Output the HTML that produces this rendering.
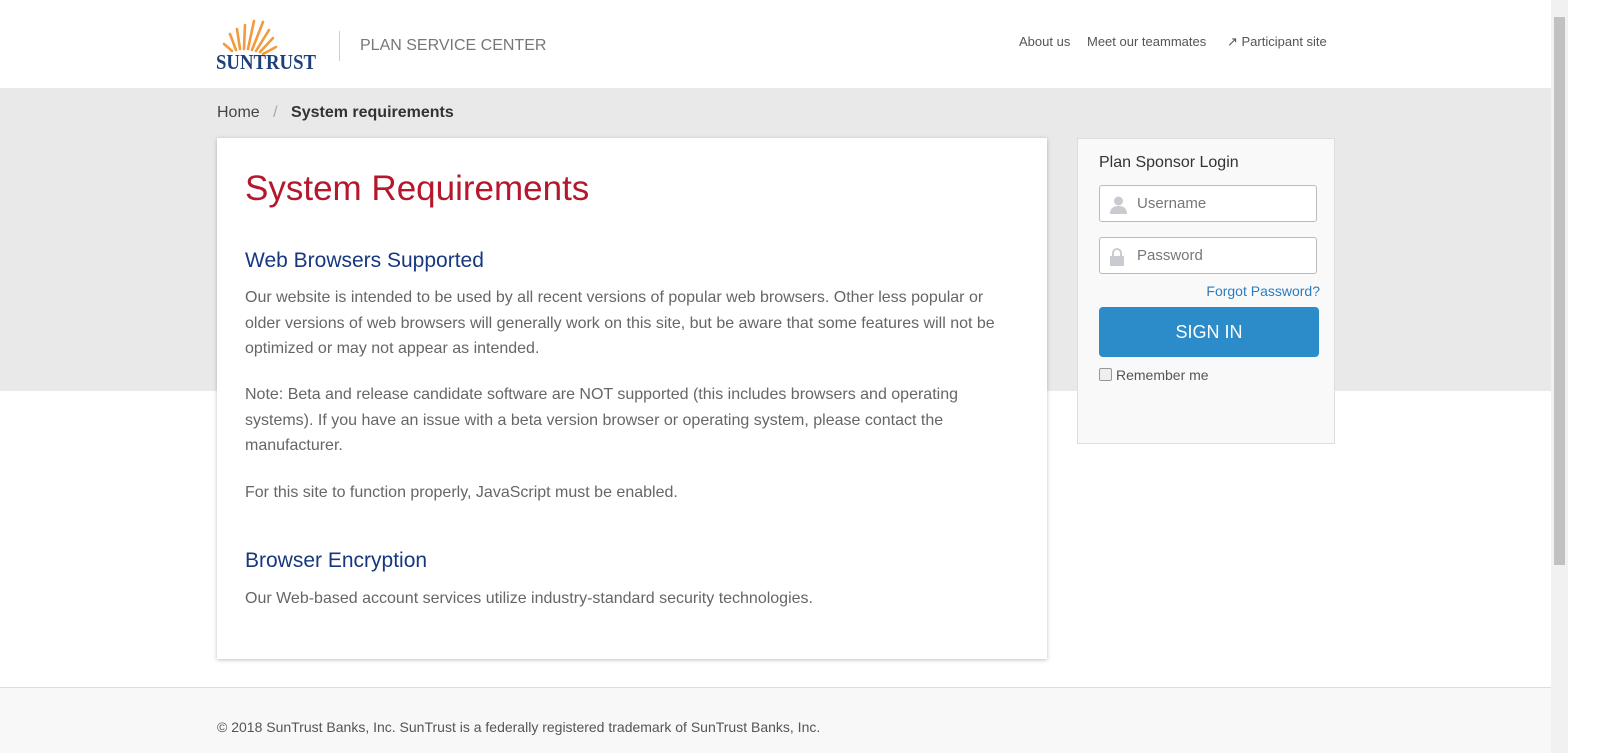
<!DOCTYPE html>
<html><head><meta charset="utf-8"><style>
*{box-sizing:border-box;margin:0;padding:0}
body{width:1600px;height:753px;overflow:hidden;background:#fff;font-family:"Liberation Sans",Arial,sans-serif;position:relative}
.abs{position:absolute}
.band{left:0;top:88px;width:1551px;height:303px;background:#e9e9e9}
.foot{left:0;top:687px;width:1551px;height:66px;background:#f8f8f8;border-top:1px solid #ddd}
.sb{left:1551px;top:0;width:17px;height:753px;background:#f1f1f1}
.sb div{position:absolute;left:3px;top:17px;width:11px;height:548px;background:#c1c1c1}
.card{left:217px;top:138px;width:830px;height:521px;background:#fff;box-shadow:0 1px 4px rgba(0,0,0,.25)}
p.t{color:#666;font-size:16px;line-height:25.5px}
h2{color:#17387f;font-weight:normal;font-size:21px}
.login{left:1077px;top:138px;width:258px;height:306px;background:#f9f9f9;border:1px solid #ddd}
.inp{position:absolute;left:21px;width:218px;height:37px;border:1px solid #bbb;border-radius:3px;background:#fff;color:#777;font-size:15px;padding:9px 0 0 37px}
</style></head><body>
<div class="abs band"></div>
<div class="abs foot"></div>
<div class="abs sb"><div></div></div>
<svg class="abs" style="left:216px;top:16px" width="102" height="56">
<g stroke="#f39a3c" stroke-width="2.6" stroke-linecap="round">
<line x1="20" y1="34" x2="14" y2="18"/><line x1="24" y1="33" x2="21" y2="13"/><line x1="28" y1="33" x2="29" y2="9"/><line x1="32" y1="33" x2="38" y2="5"/><line x1="36" y1="34" x2="47" y2="6"/><line x1="40" y1="35" x2="53" y2="14"/><line x1="44" y1="36" x2="57" y2="22"/><line x1="47" y1="38" x2="60" y2="31"/><line x1="16" y1="35" x2="8" y2="28"/>
</g>
<text x="0" y="53" font-family="Liberation Serif,serif" font-weight="bold" font-size="21" fill="#1d3f7a" textLength="100" lengthAdjust="spacingAndGlyphs">SUNTRUST</text>
</svg>
<div class="abs" style="left:339px;top:31px;width:1px;height:30px;background:#ccc"></div>
<div class="abs" style="left:360px;top:37px;font-size:16px;color:#777">PLAN SERVICE CENTER</div>
<div class="abs" style="left:1019px;top:34px;font-size:13px;color:#555">About us</div>
<div class="abs" style="left:1087px;top:34px;font-size:13px;color:#555">Meet our teammates</div>
<div class="abs" style="left:1227px;top:34px;font-size:13px;color:#555">&#x2197;&#xFE0E; Participant site</div>
<div class="abs" style="left:217px;top:104px;font-size:16px;color:#444">Home <span style="color:#aaa;margin:0 9px">/</span> <b style="color:#333">System requirements</b></div>
<div class="abs card">
<div style="position:absolute;left:28px;top:31px;font-size:35px;color:#b5172d">System Requirements</div>
<h2 class="abs" style="left:28px;top:111px">Web Browsers Supported</h2>
<p class="t abs" style="left:28px;top:147px;width:770px">Our website is intended to be used by all recent versions of popular web browsers. Other less popular or older versions of web browsers will generally work on this site, but be aware that some features will not be optimized or may not appear as intended.</p>
<p class="t abs" style="left:28px;top:244px;width:770px">Note: Beta and release candidate software are NOT supported (this includes browsers and operating systems). If you have an issue with a beta version browser or operating system, please contact the manufacturer.</p>
<p class="t abs" style="left:28px;top:342px">For this site to function properly, JavaScript must be enabled.</p>
<h2 class="abs" style="left:28px;top:411px">Browser Encryption</h2>
<p class="t abs" style="left:28px;top:448px">Our Web-based account services utilize industry-standard security technologies.</p>
</div>
<div class="abs login">
<div style="position:absolute;left:21px;top:15px;font-size:16px;color:#333">Plan Sponsor Login</div>
<div class="inp" style="top:46px">Username
<svg style="position:absolute;left:9px;top:10px" width="19" height="18"><circle cx="9.5" cy="5" r="4.5" fill="#c8cbd0"/><path d="M1 18 Q1 10 9.5 10 Q18 10 18 18Z" fill="#c8cbd0"/></svg></div>
<div class="inp" style="top:98px">Password
<svg style="position:absolute;left:9px;top:10px" width="16" height="18"><path d="M4 8V5a4 4 0 0 1 8 0v3" stroke="#c8cbd0" stroke-width="2" fill="none"/><rect x="1" y="8" width="14" height="10" fill="#c8cbd0"/></svg></div>
<div style="position:absolute;right:14px;top:144px;font-size:14px;color:#2a7dc0">Forgot Password?</div>
<div style="position:absolute;left:21px;top:168px;width:220px;height:50px;background:#2c8bc9;border-radius:4px;color:#fff;font-size:18px;text-align:center;line-height:50px">SIGN IN</div>
<div style="position:absolute;left:21px;top:229px;width:13px;height:13px;border:1px solid #999;border-radius:2px;background:#eee"></div>
<div style="position:absolute;left:38px;top:228px;font-size:14px;color:#555">Remember me</div>
</div>
<div class="abs" style="left:217px;top:719px;font-size:14px;color:#555">© 2018 SunTrust Banks, Inc. SunTrust is a federally registered trademark of SunTrust Banks, Inc.</div>
</body></html>
